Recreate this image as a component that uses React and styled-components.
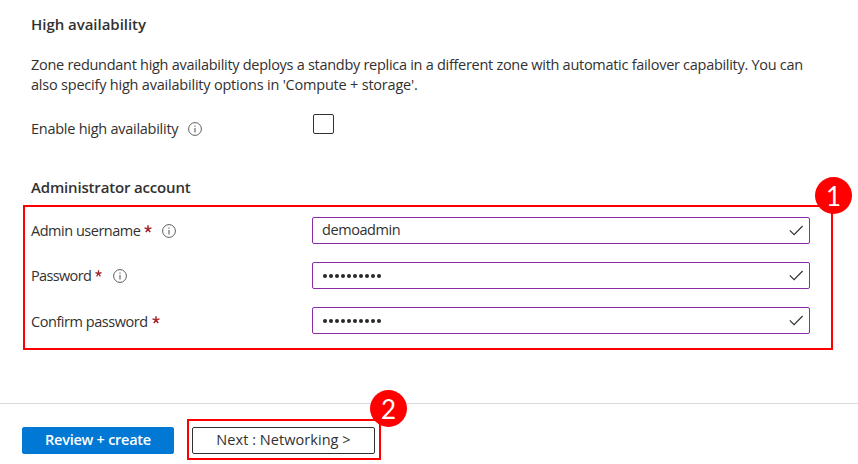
import React from "react";
import styled, { createGlobalStyle } from "styled-components";

const GlobalStyle = createGlobalStyle`
  * { box-sizing: border-box; }
  body {
    margin: 0;
    background: #fff;
    color: #323130;
    font-family: "Open Sans", "Noto Sans", sans-serif;
    font-size: 14.5px;
  }
`;

const Page = styled.main`
  width: 858px;
  height: 464px;
  overflow: hidden;
  display: flex;
  flex-direction: column;
`;

const Heading = styled.h3`
  margin: ${(p) => p.$top}px 0 0 31px;
  height: 21px;
  line-height: 20px;
  font-size: 15px;
  font-weight: 600;
  letter-spacing: ${(p) => p.$spacing || 0}px;
`;

const Description = styled.p`
  margin: 20px 0 0 31px;
  line-height: 20px;
  white-space: nowrap;
`;

const Line = styled.span`
  display: block;
  letter-spacing: ${(p) => p.$spacing}px;
`;

const CheckRow = styled.div`
  display: grid;
  grid-template-columns: 282px 1fr;
  margin: 19px 0 0 31px;
  height: 30px;
`;

const Label = styled.label`
  display: flex;
  align-items: center;
  height: ${(p) => p.$height}px;
  white-space: nowrap;
`;

const LabelText = styled.span`
  line-height: 20px;
  letter-spacing: ${(p) => p.$spacing}px;
`;

const StarIcon = styled.svg`
  width: ${(p) => p.$size}px;
  height: ${(p) => p.$size}px;
  margin: 0 0 4px 4px;
  flex: none;
`;

const InfoSvg = styled.svg`
  width: 14px;
  height: 14px;
  margin-left: ${(p) => p.$gap}px;
  flex: none;
`;

const Checkbox = styled.span`
  width: 21px;
  height: 20px;
  border: 1px solid #323130;
  border-radius: 2px;
`;

const Highlight = styled.section`
  position: relative;
  width: 810px;
  height: 145px;
  margin: 7px 0 0 23px;
  padding: 10px 21px 0 6px;
  border: 2px solid #f00;
  display: flex;
  flex-direction: column;
  gap: 18px;
`;

const Field = styled.div`
  display: grid;
  grid-template-columns: 281px 498px;
  height: 27px;
`;

const InputBox = styled.div`
  height: 27px;
  padding: 0 6px 0 9px;
  border: 1px solid #8a2da5;
  border-radius: 2px;
  display: flex;
  align-items: center;
  justify-content: space-between;
`;

const Value = styled.span`
  line-height: 24px;
  height: 25px;
  letter-spacing: ${(p) => p.$spacing}px;
`;

const Dots = styled.span`
  display: flex;
  gap: 2px;
  padding-left: 1px;
`;

const Dot = styled.i`
  width: 4px;
  height: 4px;
  border-radius: 50%;
  background: #292827;
`;

const CheckSvg = styled.svg`
  width: 14px;
  height: 11px;
`;

const Badge = styled.span`
  position: absolute;
  top: ${(p) => p.$top}px;
  right: ${(p) => p.$right}px;
  width: 37px;
  height: 37px;
  border-radius: 50%;
  background: #f00;
  color: #fff;
  font: 400 26px/39px Lato, sans-serif;
  text-align: center;
`;

const Footer = styled.footer`
  margin-top: 53px;
  height: 61px;
  border-top: 1px solid #dadada;
  padding: 15px 0 0 22px;
  display: flex;
`;

const Button = styled.button`
  width: ${(p) => (p.$primary ? 152 : 183)}px;
  height: 27px;
  margin: ${(p) => (p.$primary ? "8px 0 0" : "0")};
  padding: 0 0 1px;
  border: 1px solid ${(p) => (p.$primary ? "#0078d4" : "#323130")};
  border-radius: 2px;
  background: ${(p) => (p.$primary ? "#0078d4" : "#fff")};
  color: ${(p) => (p.$primary ? "#fff" : "#323130")};
  font-family: inherit;
  font-size: 14.5px;
  line-height: 20px;
  font-weight: ${(p) => (p.$primary ? 600 : 400)};
  letter-spacing: ${(p) => p.$spacing}px;
`;

const NextFrame = styled.div`
  position: relative;
  width: 194px;
  height: 41px;
  margin-left: 13px;
  padding: 6px 0 0 3px;
  border: 2px solid #f00;
`;

function Info({ gap }) {
  return (
    <InfoSvg $gap={gap} viewBox="0 0 14 14" fill="none" stroke="#605e5c">
      <circle cx="7" cy="7" r="6.4" strokeWidth="1" />
      <path d="M7 6v4.5M7 3.6v1.2" strokeWidth="1.1" />
    </InfoSvg>
  );
}

function Star({ size }) {
  return (
    <StarIcon $size={size} viewBox="0 0 8 8" stroke="#a4262c" strokeWidth="1.5">
      <path d="M4 4V.3M4 4L.5 2.9M4 4l3.5-1.1M4 4L1.8 7.2M4 4l2.2 3.2" />
    </StarIcon>
  );
}

function Check() {
  return (
    <CheckSvg viewBox="0 0 14 11" fill="none" stroke="#323130" strokeWidth="1.2">
      <path d="M.8 5.3l4.3 4.3L13.6 1" />
    </CheckSvg>
  );
}

function Password() {
  return (
    <Dots>
      {Array.from({ length: 10 }, (_, i) => (
        <Dot key={i} />
      ))}
    </Dots>
  );
}

export default function App() {
  return (
    <Page>
      <GlobalStyle />
      <Heading $top={14} $spacing={-0.03}>High availability</Heading>
      <Description>
        <Line $spacing={-0.285}>
          Zone redundant high availability deploys a standby replica in a different zone with automatic failover capability. You can
        </Line>
        <Line $spacing={-0.21}>also specify high availability options in 'Compute + storage'.</Line>
      </Description>
      <CheckRow>
        <Label $height={29}>
          <LabelText $spacing={-0.26}>Enable high availability</LabelText>
          <Info gap={10} />
        </Label>
        <Checkbox />
      </CheckRow>
      <Heading $top={33} $spacing={-0.17}>Administrator account</Heading>
      <Highlight>
        <Field>
          <Label $height={27}>
            <LabelText $spacing={-0.48}>Admin username</LabelText>
            <Star size={8} />
            <Info gap={10} />
          </Label>
          <InputBox>
            <Value $spacing={-0.42}>demoadmin</Value>
            <Check />
          </InputBox>
        </Field>
        <Field>
          <Label $height={27}>
            <LabelText $spacing={-0.65}>Password</LabelText>
            <Star size={7} />
            <Info gap={11} />
          </Label>
          <InputBox>
            <Password />
            <Check />
          </InputBox>
        </Field>
        <Field>
          <Label $height={29}>
            <LabelText $spacing={-0.45}>Confirm password</LabelText>
            <Star size={8} />
          </Label>
          <InputBox>
            <Password />
            <Check />
          </InputBox>
        </Field>
        <Badge $top={-30} $right={-21}>1</Badge>
      </Highlight>
      <Footer>
        <Button $primary $spacing={-0.26}>Review + create</Button>
        <NextFrame>
          <Button $spacing={0.05}>Next : Networking &gt;</Button>
          <Badge $top={-31} $right={-28}>2</Badge>
        </NextFrame>
      </Footer>
    </Page>
  );
}
